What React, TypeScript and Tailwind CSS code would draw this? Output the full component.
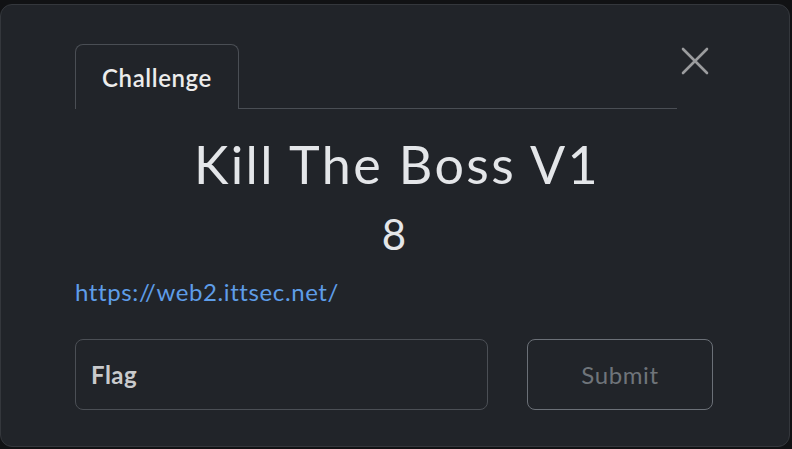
import React from 'react';

const CloseIcon = () => (
  <svg width="28" height="28" viewBox="0 0 28 28" fill="none">
    <path d="M2 2 L26 26 M26 2 L2 26" stroke="#9b9c9e" strokeWidth="2.6" strokeLinecap="round" />
  </svg>
);

const App = () => {
  return (
    <div
      className="w-[792px] h-[449px] bg-[#111214] pt-[4px] overflow-hidden"
      style={{ fontFamily: 'Lato, "Noto Sans", sans-serif' }}
    >
      <div className="w-[790px] h-[443px] bg-[#212429] border border-[#34373c] rounded-[12px] pl-[74px] pr-[76px] pt-[39px]">
        {/* Header with tabs */}
        <div className="flex items-start">
          <div className="flex-1 flex items-end">
            <div className="w-[164px] h-[65px] border border-b-0 border-[#4a4e54] rounded-t-[8px] flex items-center justify-center pt-[2px]">
              <span className="text-[24px] font-semibold tracking-[0.6px] text-[#ececec]">Challenge</span>
            </div>
            <div className="flex-1 border-b border-[#4a4e54]" />
          </div>
          <button className="w-[36px] h-[36px] mt-[-1px] flex items-center justify-center">
            <CloseIcon />
          </button>
        </div>

        {/* Title */}
        <div className="text-center mt-[28px]">
          <h1 className="text-[52px] leading-[54px] text-[#e4e6e9] tracking-[2.4px] pl-[6px]">Kill The Boss V1</h1>
          <p className="text-[42px] leading-[48px] text-[#e4e6e9] mt-[19px]">8</p>
        </div>

        <a className="block mt-[19px] text-[24px] leading-[30px] tracking-[0.6px] text-[#5e9de8]" href="#">
          https://web2.ittsec.net/
        </a>

        {/* Form */}
        <div className="flex items-center mt-[32px]">
          <div className="w-[413px] h-[71px] border border-[#4b4f55] rounded-[8px] flex items-center px-[15px]">
            <span className="text-[24px] font-bold tracking-[0.5px] text-[#c9cacc]">Flag</span>
          </div>
          <div className="flex-1" />
          <button className="w-[186px] h-[71px] border border-[#6b7077] rounded-[8px] text-[24px] tracking-[0.6px] text-[#6f747a]">
            Submit
          </button>
        </div>
      </div>
    </div>
  );
};

export default App;
